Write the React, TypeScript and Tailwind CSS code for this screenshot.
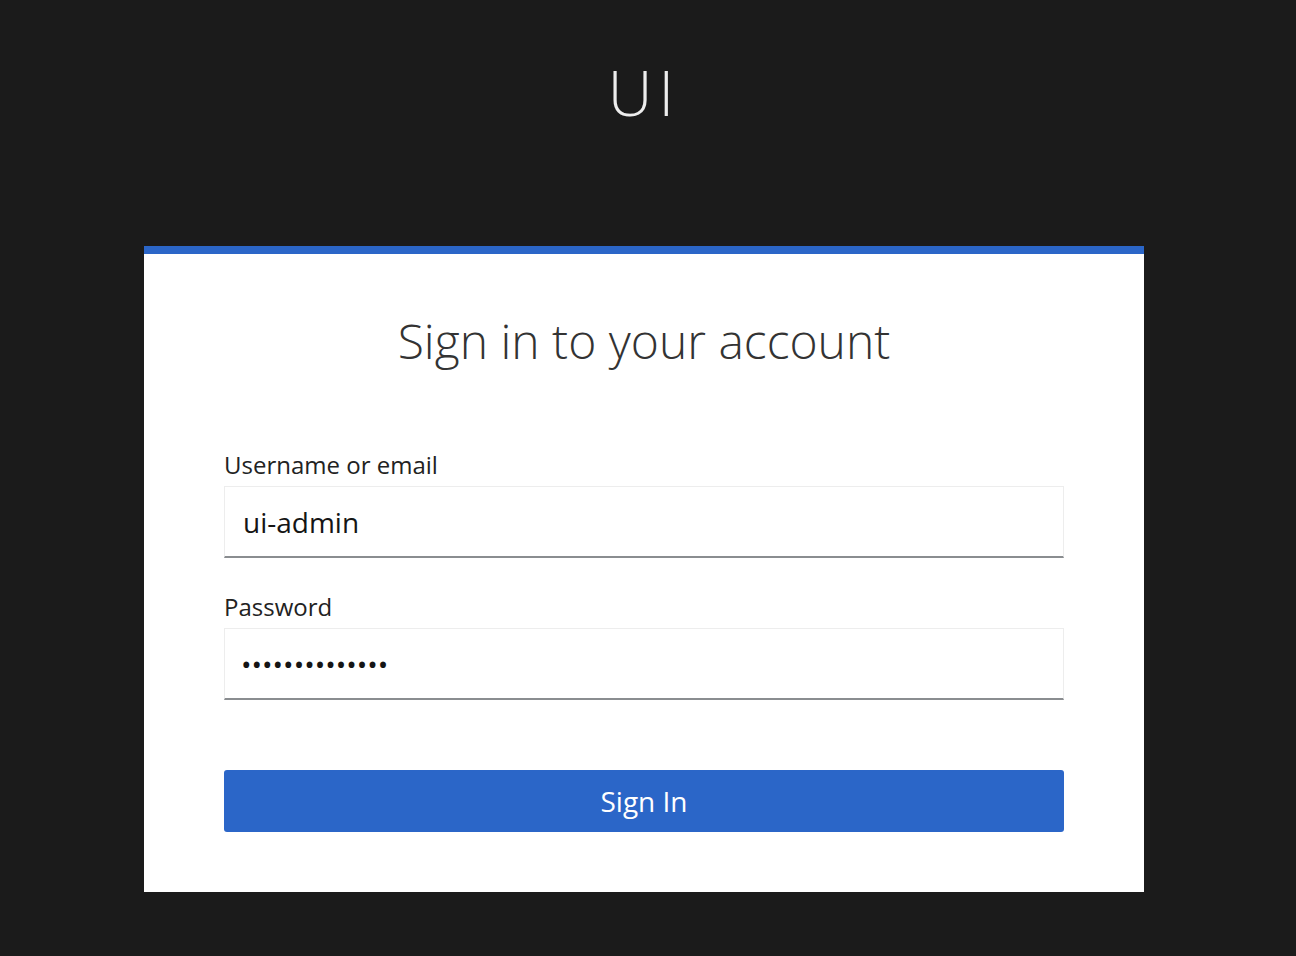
import React from 'react';

const App = () => {
  return (
    <div
      className="min-h-screen w-full bg-[#1b1b1b] flex flex-col items-center pr-[8px]"
      style={{ fontFamily: '"Open Sans", "Liberation Sans", sans-serif' }}
    >
      {/* Realm header */}
      <header className="pt-[52px] h-[246px] flex justify-center">
        <h1 className="text-[62px] leading-[80px] font-light tracking-[0.1em] text-[#ededed]">UI</h1>
      </header>

      {/* Login card */}
      <main className="w-[1000px] bg-white border-t-[8px] border-[#2b66c8]">
        <div className="px-[80px] pt-[54px] pb-[60px]">
          <h2 className="text-center text-[48px] leading-[66px] font-light text-[#333333]">
            Sign in to your account
          </h2>

          <form className="mt-[76px] flex flex-col" onSubmit={(e) => e.preventDefault()}>
            <label className="text-[24px] leading-[30px] text-[#222222] mb-[6px]" htmlFor="username">
              Username or email
            </label>
            <input
              id="username"
              defaultValue="ui-admin"
              className="h-[72px] px-[18px] text-[28px] text-[#151515] bg-white border border-[#ededed] border-b-2 border-b-[#8a8d90] outline-none"
            />

            <label className="mt-[34px] text-[24px] leading-[30px] text-[#222222] mb-[6px]" htmlFor="password">
              Password
            </label>
            <input
              id="password"
              type="password"
              defaultValue="uiadminpasswrd"
              className="h-[72px] px-[16px] text-[28px] text-[#151515] bg-white border border-[#ededed] border-b-2 border-b-[#8a8d90] outline-none"
            />

            <button
              type="submit"
              className="mt-[70px] h-[62px] rounded-[3px] bg-[#2b66c8] text-white text-[28px]"
            >
              Sign In
            </button>
          </form>
        </div>
      </main>
    </div>
  );
};

export default App;
